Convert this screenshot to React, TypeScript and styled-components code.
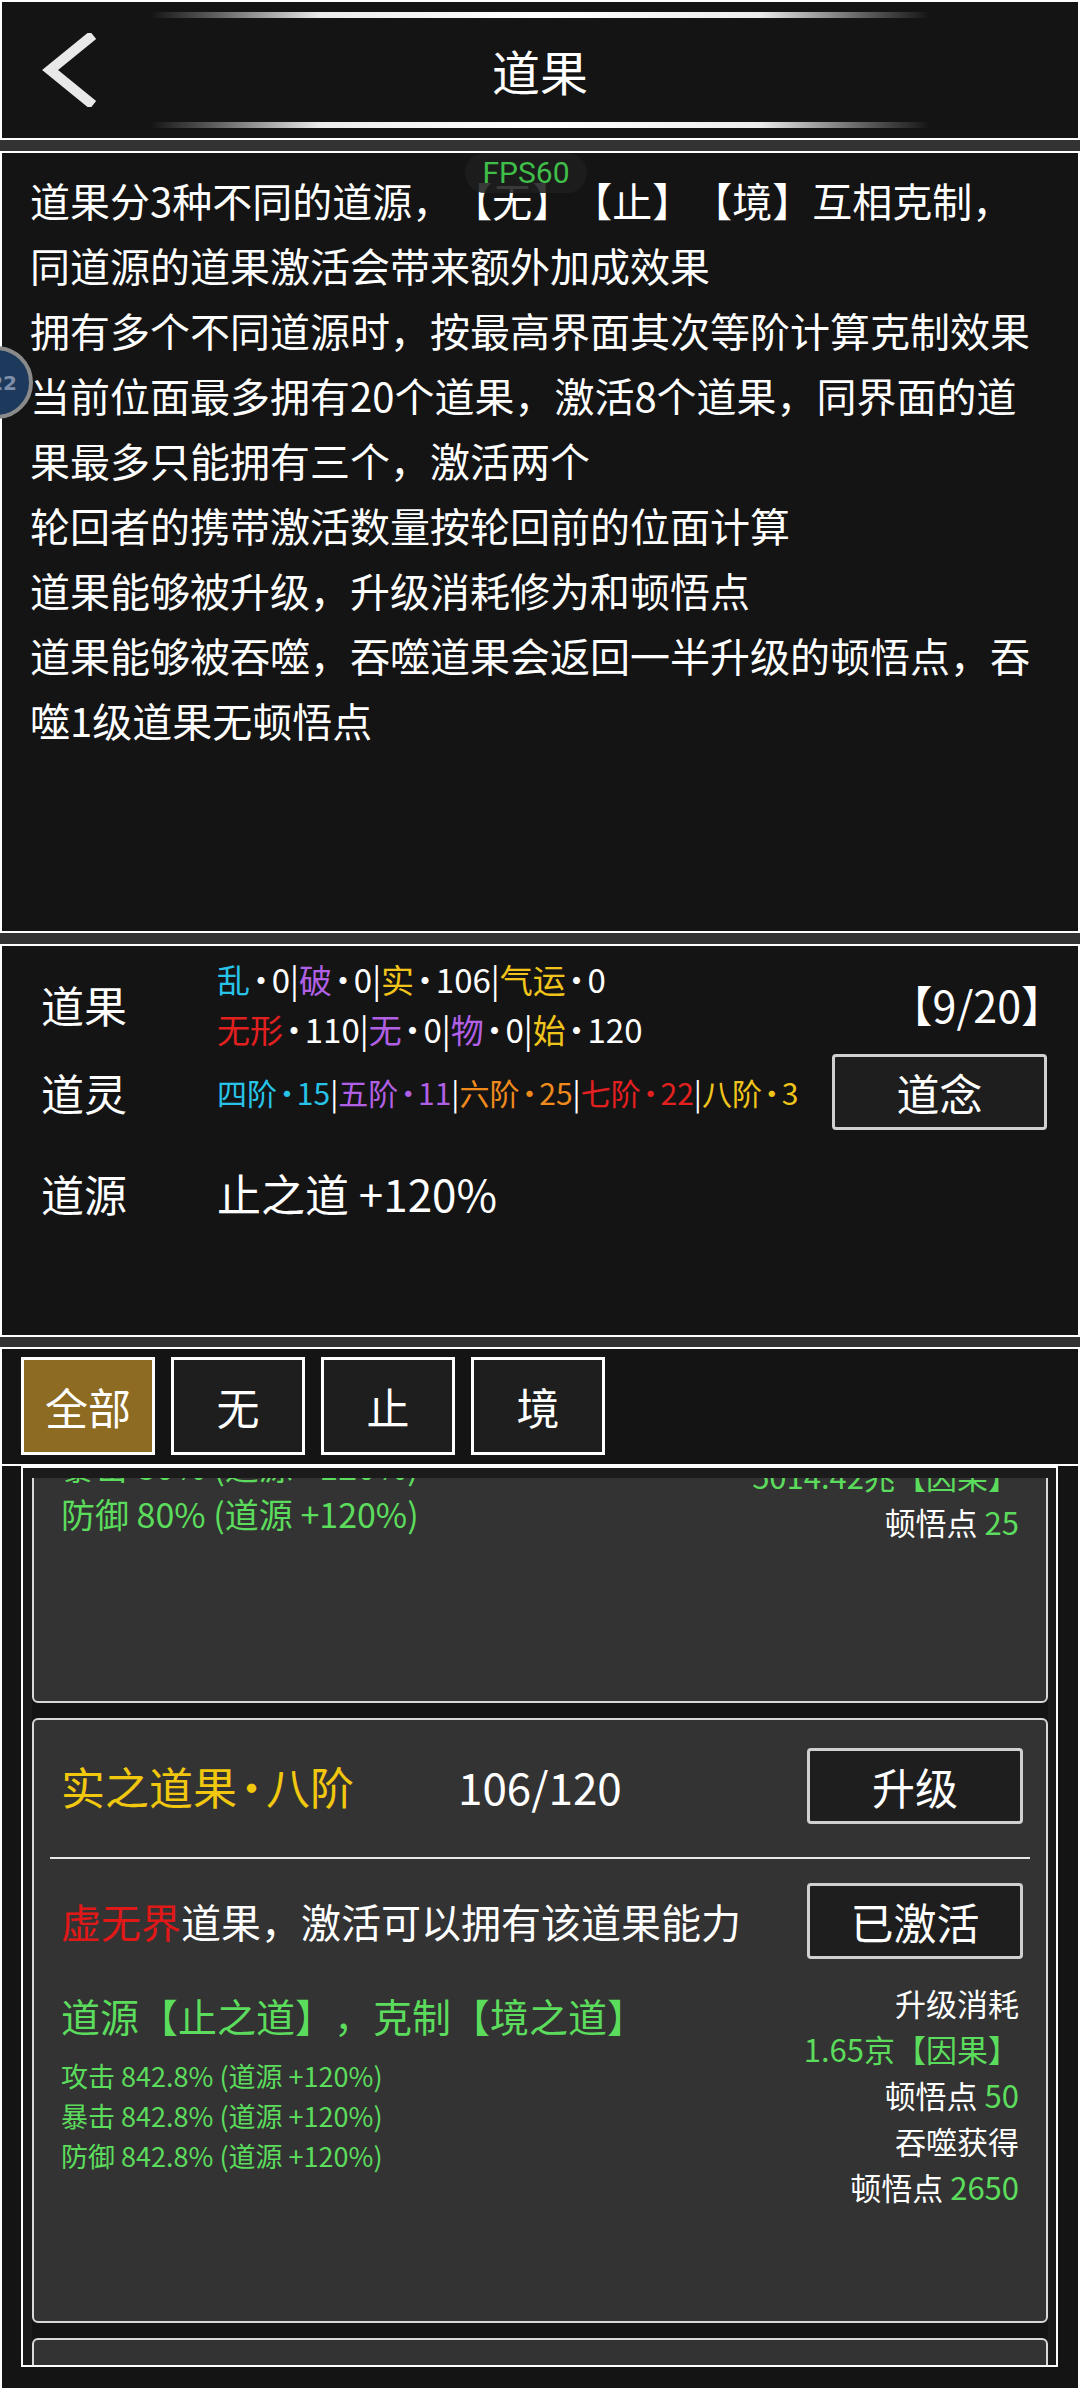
import React from 'react';
import styled, { createGlobalStyle } from 'styled-components';

const GlobalStyle = createGlobalStyle`
    html, body {
        margin: 0;
        padding: 0;
        background: #333333;
    }
    body {
        font-family: "Noto Sans CJK SC", "Noto Sans", sans-serif;
        color: #ffffff;
        text-spacing-trim: space-all;
    }
    * {
        box-sizing: border-box;
    }
`;

const GREEN = '#5cdc5c';

const Page = styled.div`
    position: relative;
    width: 1080px;
    height: 2388px;
    overflow: hidden;
    background: #333333;
`;

const Panel = styled.section<{ $h: number; $gap: number }>`
    background: #141414;
    border: 2px solid #ffffff;
    height: ${(p) => p.$h}px;
    margin-bottom: ${(p) => p.$gap}px;
`;

/* header */

const Header = styled(Panel)`
    display: flex;
    flex-direction: column;
    align-items: center;
    padding-top: 10px;
`;

const Glow = styled.div<{ $mt: number }>`
    width: 780px;
    height: 6px;
    margin-top: ${(p) => p.$mt}px;
    border-radius: 3px;
    background: linear-gradient(
        90deg,
        rgba(255, 255, 255, 0) 0%,
        rgba(255, 255, 255, 0.3) 8%,
        rgba(255, 255, 255, 0.92) 22%,
        #ffffff 50%,
        rgba(255, 255, 255, 0.92) 78%,
        rgba(255, 255, 255, 0.3) 92%,
        rgba(255, 255, 255, 0) 100%
    );
`;

const TitleBar = styled.div`
    width: 100%;
    height: 74px;
    margin-top: 15px;
    display: grid;
    grid-template-columns: 1fr auto 1fr;
    align-items: center;
`;

const BackButton = styled.div`
    padding-left: 38px;
    display: flex;
    align-items: center;
`;

const Title = styled.h1`
    margin: 0;
    font-size: 48px;
    font-weight: 400;
    line-height: 74px;
`;

/* rules */

const RulesPanel = styled(Panel)`
    padding: 15px 36px 0 28px;
`;

const RuleLine = styled.p`
    margin: 0;
    font-size: 40px;
    line-height: 65px;
`;

/* stats */

const StatsPanel = styled(Panel)`
    padding: 8px 31px 0 39px;
`;

const StatRow = styled.div<{ $h: number; $mt?: number }>`
    display: flex;
    align-items: center;
    height: ${(p) => p.$h}px;
    margin-top: ${(p) => p.$mt ?? 0}px;
`;

const RowLabel = styled.div`
    width: 176px;
    flex-shrink: 0;
    font-size: 43px;
    line-height: 1;
`;

const Values = styled.div<{ $size: number }>`
    flex: 1;
    min-width: 0;
    font-size: ${(p) => p.$size}px;
    line-height: 50px;
    white-space: nowrap;
`;

const Tint = styled.span<{ $c: string }>`
    color: ${(p) => p.$c};
`;

const Dot = styled.span`
    margin: 0 -0.17em;
`;

const Count = styled.div`
    font-size: 43px;
    line-height: 1;
    margin-right: -17px;
`;

const FrameButton = styled.div<{ $w: number; $h: number }>`
    width: ${(p) => p.$w}px;
    height: ${(p) => p.$h}px;
    flex-shrink: 0;
    display: flex;
    align-items: center;
    justify-content: center;
    background: #1e1e1e;
    border: 3px solid #d0d0d0;
    border-radius: 4px;
    font-size: 43px;
    color: #ffffff;
`;

const SourceValue = styled.div`
    font-size: 44px;
    line-height: 1;
`;

/* tabs */

const TabsPanel = styled(Panel)`
    display: flex;
    gap: 16px;
    padding: 8px 0 0 19px;
`;

const Tab = styled.div<{ $active?: boolean }>`
    width: 134px;
    height: 98px;
    display: flex;
    align-items: center;
    justify-content: center;
    font-size: 43px;
    background: ${(p) => (p.$active ? '#8d6b22' : '#1e1e1e')};
    border: 3px solid #ffffff;
`;

/* list */

const ListPanel = styled.section`
    height: 922px;
    background: #141414;
    border-left: 2px solid #ffffff;
    border-right: 2px solid #ffffff;
    padding: 0 20px 0 19px;
`;

const ListFrame = styled.div`
    height: 901px;
    border: 2px solid #ffffff;
    background: #1b1b1b;
    padding: 10px 8px 0 9px;
`;

const Viewport = styled.div`
    height: 887px;
    overflow: hidden;
    background: #141414;
`;

const Track = styled.div<{ $scroll: number }>`
    margin-top: ${(p) => -p.$scroll}px;
    display: flex;
    flex-direction: column;
    gap: 15px;
`;

const Card = styled.article`
    height: 605px;
    flex-shrink: 0;
    background: #333333;
    border: 2px solid #d8d8d8;
    border-radius: 6px;
    padding: 28px 23px 0 27px;
    overflow: hidden;
`;

const CardRow = styled.div<{ $mt?: number }>`
    display: flex;
    align-items: center;
    height: 76px;
    margin-top: ${(p) => p.$mt ?? 0}px;
`;

const FruitName = styled.div`
    width: 397px;
    flex-shrink: 0;
    font-size: 44px;
    color: #f2c80f;
`;

const Progress = styled.div`
    flex: 1;
    font-size: 44px;
`;

const Divider = styled.div`
    height: 2px;
    margin: 33px -7px 0 -11px;
    background: #e8e8e8;
`;

const RealmText = styled.div`
    flex: 1;
    font-size: 40px;
`;

const Tail = styled.div<{ $mt: number }>`
    display: flex;
    justify-content: space-between;
    align-items: flex-start;
    margin-top: ${(p) => p.$mt}px;
`;

const TailLeft = styled.div<{ $pt: number }>`
    padding-top: ${(p) => p.$pt}px;
    color: ${GREEN};
`;

const SourceLine = styled.div`
    font-size: 39px;
    line-height: 56px;
    margin-bottom: 13px;
`;

const StatLine = styled.div<{ $size: number; $line: number }>`
    font-size: ${(p) => p.$size}px;
    line-height: ${(p) => p.$line}px;
`;

const TailRight = styled.div<{ $pt: number }>`
    padding: ${(p) => p.$pt}px 4px 0 0;
    text-align: right;
    font-size: 31px;
    line-height: 46px;
`;

const Green = styled.span`
    color: ${GREEN};
`;

/* overlays */

const FpsBadge = styled.div`
    position: absolute;
    left: 465px;
    top: 153px;
    width: 122px;
    height: 40px;
    border-radius: 20px;
    background: rgba(30, 30, 30, 0.88);
    color: #3fbf4a;
    font-family: Roboto, "Noto Sans", sans-serif;
    font-size: 30px;
    line-height: 40px;
    text-align: center;
`;

const FloatBall = styled.div`
    position: absolute;
    left: -40px;
    top: 346px;
    width: 73px;
    height: 73px;
    border-radius: 50%;
    background: #1d3a5c;
    border: 4px solid #8a8a8a;
    display: flex;
    align-items: center;
    justify-content: flex-end;
    padding-right: 12px;
    color: #7d8ea8;
    font-family: "DejaVu Sans", sans-serif;
    font-weight: 700;
    font-size: 20px;
`;

type Seg = { t: string; c: string; n: string; nc?: string };

const fruitRow1: Seg[] = [
    { t: '乱', c: '#27c3e8', n: '0' },
    { t: '破', c: '#b160e6', n: '0' },
    { t: '实', c: '#f0c41a', n: '106' },
    { t: '气运', c: '#f0c41a', n: '0' },
];

const fruitRow2: Seg[] = [
    { t: '无形', c: '#e32020', n: '110' },
    { t: '无', c: '#b160e6', n: '0' },
    { t: '物', c: '#b160e6', n: '0' },
    { t: '始', c: '#f0c41a', n: '120' },
];

const spiritRow: Seg[] = [
    { t: '四阶', c: '#27c3e8', n: '15', nc: '#27c3e8' },
    { t: '五阶', c: '#b160e6', n: '11', nc: '#b160e6' },
    { t: '六阶', c: '#f08a1c', n: '25', nc: '#f08a1c' },
    { t: '七阶', c: '#e32020', n: '22', nc: '#e32020' },
    { t: '八阶', c: '#f0c41a', n: '3', nc: '#f0c41a' },
];

const SegLine: React.FC<{ segs: Seg[] }> = ({ segs }) => (
    <div>
        {segs.map((s, i) => (
            <React.Fragment key={s.t}>
                {i > 0 && '|'}
                <Tint $c={s.c}>{s.t}</Tint>
                <Tint $c={s.nc ?? '#ffffff'}>
                    <Dot>·</Dot>
                    {s.n}
                </Tint>
            </React.Fragment>
        ))}
    </div>
);

const rules = [
    '道果分3种不同的道源，【无】【止】【境】互相克制，',
    '同道源的道果激活会带来额外加成效果',
    '拥有多个不同道源时，按最高界面其次等阶计算克制效果',
    '当前位面最多拥有20个道果，激活8个道果，同界面的道果最多只能拥有三个，激活两个',
    '轮回者的携带激活数量按轮回前的位面计算',
    '道果能够被升级，升级消耗修为和顿悟点',
    '道果能够被吞噬，吞噬道果会返回一半升级的顿悟点，吞噬1级道果无顿悟点',
];

type Cost = { label?: string; value?: string };

type Fruit = {
    name: string;
    rank: string;
    progress: string;
    realm: string;
    source?: string;
    stats: string[];
    costs: Cost[];
    tailTop: number;
    leftTop: number;
    rightTop: number;
    statSize: number;
    statLine: number;
};

const fruits: Fruit[] = [
    {
        name: '乱之道果',
        rank: '一阶',
        progress: '0/120',
        realm: '虚无界',
        stats: ['攻击 80% (道源 +120%)', '暴击 80% (道源 +120%)', '防御 80% (道源 +120%)'],
        costs: [{ label: '升级消耗' }, { value: '5014.42兆【因果】' }, { label: '顿悟点 ', value: '25' }],
        tailTop: 47,
        leftTop: 8,
        rightTop: 21,
        statSize: 34,
        statLine: 48,
    },
    {
        name: '实之道果',
        rank: '八阶',
        progress: '106/120',
        realm: '虚无界',
        source: '道源【止之道】，克制【境之道】',
        stats: ['攻击 842.8% (道源 +120%)', '暴击 842.8% (道源 +120%)', '防御 842.8% (道源 +120%)'],
        costs: [
            { label: '升级消耗' },
            { value: '1.65京【因果】' },
            { label: '顿悟点 ', value: '50' },
            { label: '吞噬获得' },
            { label: '顿悟点 ', value: '2650' },
        ],
        tailTop: 21,
        leftTop: 7,
        rightTop: 0,
        statSize: 27,
        statLine: 40,
    },
    {
        name: '境之道果',
        rank: '七阶',
        progress: '22/120',
        realm: '虚无界',
        source: '道源【境之道】，克制【无之道】',
        stats: ['攻击 520.4% (道源 +120%)'],
        costs: [{ label: '升级消耗' }],
        tailTop: 21,
        leftTop: 7,
        rightTop: 0,
        statSize: 27,
        statLine: 40,
    },
];

const FruitCard: React.FC<{ fruit: Fruit }> = ({ fruit }) => (
    <Card>
        <CardRow>
            <FruitName>
                {fruit.name}
                <Dot>·</Dot>
                {fruit.rank}
            </FruitName>
            <Progress>{fruit.progress}</Progress>
            <FrameButton $w={216} $h={76}>
                升级
            </FrameButton>
        </CardRow>
        <Divider />
        <CardRow $mt={24}>
            <RealmText>
                <Tint $c="#e01818">{fruit.realm}</Tint>道果，激活可以拥有该道果能力
            </RealmText>
            <FrameButton $w={216} $h={76}>
                已激活
            </FrameButton>
        </CardRow>
        <Tail $mt={fruit.tailTop}>
            <TailLeft $pt={fruit.leftTop}>
                {fruit.source && <SourceLine>{fruit.source}</SourceLine>}
                {fruit.stats.map((s) => (
                    <StatLine key={s} $size={fruit.statSize} $line={fruit.statLine}>
                        {s}
                    </StatLine>
                ))}
            </TailLeft>
            <TailRight $pt={fruit.rightTop}>
                {fruit.costs.map((c, i) => (
                    <div key={i}>
                        {c.label}
                        {c.value && <Green>{c.value}</Green>}
                    </div>
                ))}
            </TailRight>
        </Tail>
    </Card>
);

const BackIcon = () => (
    <svg width="60" height="74" viewBox="0 0 60 74">
        <polyline points="53,2 10,37 53,72" fill="none" stroke="#e8e8e8" strokeWidth="10" />
    </svg>
);

export default function App() {
    return (
        <Page>
            <GlobalStyle />
            <Header $h={140} $gap={11}>
                <Glow $mt={0} />
                <TitleBar>
                    <BackButton>
                        <BackIcon />
                    </BackButton>
                    <Title>道果</Title>
                    <div />
                </TitleBar>
                <Glow $mt={15} />
            </Header>

            <RulesPanel $h={782} $gap={11}>
                {rules.map((r) => (
                    <RuleLine key={r}>{r}</RuleLine>
                ))}
            </RulesPanel>

            <StatsPanel $h={393} $gap={10}>
                <StatRow $h={100}>
                    <RowLabel>道果</RowLabel>
                    <Values $size={33}>
                        <SegLine segs={fruitRow1} />
                        <SegLine segs={fruitRow2} />
                    </Values>
                    <Count>【9/20】</Count>
                </StatRow>
                <StatRow $h={76}>
                    <RowLabel>道灵</RowLabel>
                    <Values $size={30}>
                        <SegLine segs={spiritRow} />
                    </Values>
                    <FrameButton $w={215} $h={76}>
                        道念
                    </FrameButton>
                </StatRow>
                <StatRow $h={60} $mt={33}>
                    <RowLabel>道源</RowLabel>
                    <SourceValue>止之道 +120%</SourceValue>
                </StatRow>
            </StatsPanel>

            <TabsPanel $h={119} $gap={0}>
                <Tab $active>全部</Tab>
                <Tab>无</Tab>
                <Tab>止</Tab>
                <Tab>境</Tab>
            </TabsPanel>

            <ListPanel>
                <ListFrame>
                    <Viewport>
                        <Track $scroll={380}>
                            {fruits.map((f) => (
                                <FruitCard key={f.name} fruit={f} />
                            ))}
                        </Track>
                    </Viewport>
                </ListFrame>
            </ListPanel>

            <FpsBadge>FPS60</FpsBadge>
            <FloatBall>22</FloatBall>
        </Page>
    );
}
